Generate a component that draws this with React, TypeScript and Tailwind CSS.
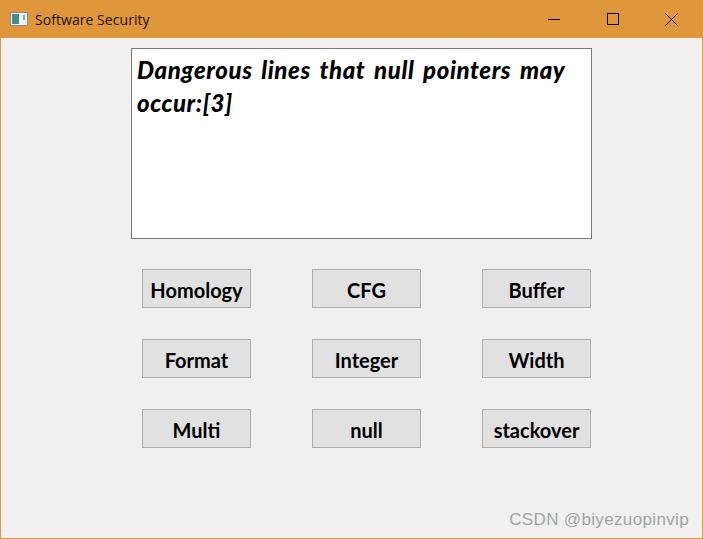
const labels = ["Homology", "CFG", "Buffer", "Format", "Integer", "Width", "Multi", "null", "stackover"];

export default function App() {
  return (
    <div className="flex h-[539px] w-[703px] flex-col overflow-hidden border-x border-b border-[#e0963a] bg-[#f0f0f0] font-['Lato','Noto_Sans',sans-serif]">
      <header className="-mx-px flex h-[38px] shrink-0 items-center bg-[#e0963a]">
        <svg width="18" height="14" viewBox="0 0 18 14" className="ml-[10px] shrink-0">
          <rect x="0.5" y="0.5" width="17" height="13" fill="#f4f4f4" stroke="#8a8a8a" />
          <rect x="2" y="2" width="7" height="10" fill="#3f8f86" />
          <rect x="13" y="3" width="2" height="5" fill="#66b5b0" />
        </svg>
        <span className="ml-[7px] font-['Open_Sans'] text-[14px] tracking-[0.05px] text-[#1c1208]">Software Security</span>
        <div className="mr-[2px] ml-auto flex h-full">
          <div className="flex w-[59px] items-center justify-center">
            <div className="h-px w-3 bg-black" />
          </div>
          <div className="flex w-[59px] items-center justify-center">
            <div className="h-3 w-3 border border-black" />
          </div>
          <div className="flex w-[59px] items-center justify-center">
            <svg width="13" height="13" viewBox="0 0 13 13" fill="none" stroke="black">
              <path d="M0.5 0.5 12.5 12.5M12.5 0.5 0.5 12.5" />
            </svg>
          </div>
        </div>
      </header>
      <main className="flex flex-1 flex-col pl-[130px] pt-[10px]">
        <div className="h-[191px] w-[461px] border border-[#7a7a7a] bg-white px-[5px] py-[4px] text-[24px] leading-[33px] font-black tracking-[0.6px] text-black italic [word-spacing:3px]">
          Dangerous lines that null pointers may occur:[3]
        </div>
        <div className="mt-[30px] ml-[11px] grid w-[449px] grid-cols-[109px_109px_109px] justify-between gap-y-[31px]">
          {labels.map((l) => (
            <button
              key={l}
              className="flex h-[39px] items-center justify-center border border-[#adadad] bg-[#e1e1e1] pt-[2px] text-[20px] font-bold whitespace-nowrap text-black"
            >
              {l}
            </button>
          ))}
        </div>
        <div className="mt-auto mr-[13px] mb-[9px] self-end font-['Liberation_Sans'] text-[17px] leading-[18px] tracking-[0.35px] text-[#a3a3a3]">
          CSDN @biyezuopinvip
        </div>
      </main>
    </div>
  );
}
